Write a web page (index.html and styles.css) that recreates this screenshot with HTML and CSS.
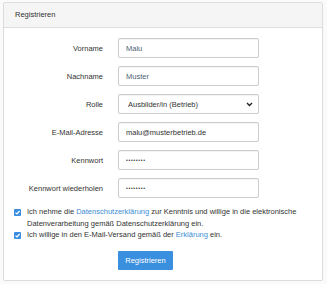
FILE: index.html
```html
<!DOCTYPE html>
<html lang="de">
<head>
    <meta charset="UTF-8">
    <title>Registrieren</title>
    <link rel="stylesheet" href="styles.css">
</head>
<body>

    <div class="panel">
        <div class="panel-heading">Registrieren</div>
        <form class="panel-body" action="#">
            <div class="form-row">
                <label for="vorname">Vorname</label>
                <input type="text" id="vorname" value="Malu">
            </div>
            <div class="form-row">
                <label for="nachname">Nachname</label>
                <input type="text" id="nachname" value="Muster">
            </div>
            <div class="form-row">
                <label for="rolle">Rolle</label>
                <div class="select">
                    <span>Ausbilder/in (Betrieb)</span>
                    <svg width="7" height="5" viewBox="0 0 7 5"><path d="M1 1 L3.5 3.5 L6 1" fill="none" stroke="#222" stroke-width="1.4"/></svg>
                </div>
            </div>
            <div class="form-row">
                <label for="email">E-Mail-Adresse</label>
                <input type="text" id="email" value="malu@musterbetrieb.de" class="dark">
            </div>
            <div class="form-row">
                <label for="pw">Kennwort</label>
                <input type="text" id="pw" value="••••••••" class="dark pw">
            </div>
            <div class="form-row">
                <label for="pw2">Kennwort wiederholen</label>
                <input type="text" id="pw2" value="••••••••" class="dark pw">
            </div>

            <div class="checks">
                <div class="check">
                    <span class="box"><svg width="7" height="7" viewBox="0 0 7 7"><path d="M1.5 3.6 L3 5 L5.6 2" fill="none" stroke="#fff" stroke-width="1.2"/></svg></span>
                    <p>Ich nehme die <a href="#">Datenschutzerklärung</a> zur Kenntnis und willige in die elektronische Datenverarbeitung gemäß Datenschutzerklärung ein.</p>
                </div>
                <div class="check">
                    <span class="box"><svg width="7" height="7" viewBox="0 0 7 7"><path d="M1.5 3.6 L3 5 L5.6 2" fill="none" stroke="#fff" stroke-width="1.2"/></svg></span>
                    <p>Ich willige in den E-Mail-Versand gemäß der <a href="#">Erklärung</a> ein.</p>
                </div>
            </div>

            <div class="submit-row">
                <button type="submit" class="submit-btn">Registrieren</button>
            </div>
        </form>
    </div>

</body>
</html>
```

FILE: styles.css
```css
* {
    box-sizing: border-box;
    margin: 0;
    padding: 0;
}

body {
    font-family: "Liberation Sans", Arial, sans-serif;
    font-size: 7.5px;
    color: #333;
    background-color: #fafafa;
    padding: 2px 4px 0 3px;
}

/* Panel */
.panel {
    background-color: #fff;
    border: 1px solid #ddd;
    border-radius: 2px;
    box-shadow: 0 1px 1px rgba(0, 0, 0, 0.04);
    height: 279px;
}

.panel-heading {
    height: 25px;
    line-height: 24px;
    padding-left: 11px;
    background-color: #f5f5f5;
    border-bottom: 1px solid #ddd;
    color: #333;
}

.panel-body {
    padding-top: 10px;
    display: flex;
    flex-direction: column;
}

/* Form rows */
.form-row {
    display: grid;
    grid-template-columns: 99px 141px;
    column-gap: 15px;
    align-items: center;
    height: 20px;
    margin-bottom: 8px;
}

.form-row label {
    text-align: right;
    color: #333;
}

.form-row input,
.select {
    height: 20px;
    border: 1px solid #ccc;
    border-radius: 2px;
    font-family: inherit;
    font-size: 7.5px;
    padding: 0 7px;
    color: #4d6273;
    background-color: #fff;
    box-shadow: inset 0 1px 1px rgba(0, 0, 0, 0.05);
    outline: none;
}

.form-row input.dark {
    color: #333;
}

.form-row input.pw {
    font-size: 5px;
    letter-spacing: 0.7px;
}

.select {
    display: flex;
    align-items: center;
    justify-content: space-between;
    padding: 0 5px 0 9px;
    color: #333;
}

/* Checkboxes */
.checks {
    padding-left: 10px;
    padding-right: 20px;
}

.check {
    display: flex;
    align-items: flex-start;
    line-height: 11.5px;
}

.check .box {
    flex: none;
    width: 7px;
    height: 7px;
    margin-top: 2.5px;
    margin-right: 6px;
    border-radius: 1px;
    background-color: #3a8ee0;
    display: flex;
}

.check a {
    color: #3c8dd5;
    text-decoration: none;
}

/* Submit */
.submit-row {
    padding-left: 114px;
    margin-top: 10px;
}

.submit-btn {
    width: 55px;
    height: 19px;
    background-color: #3a8fde;
    color: #fff;
    border: none;
    border-radius: 1px;
    font-family: inherit;
    font-size: 7.5px;
    cursor: pointer;
}
```
